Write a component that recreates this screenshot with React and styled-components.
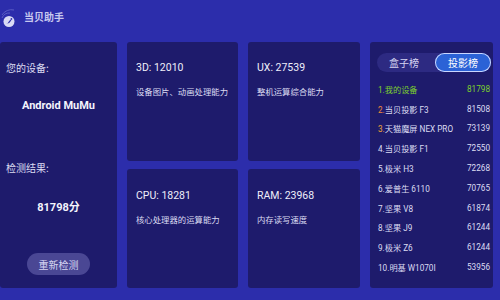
import React from "react";
import styled, { createGlobalStyle } from "styled-components";

const Global = createGlobalStyle`
  html, body { margin: 0; padding: 0; }
  body {
    width: 500px; height: 300px; overflow: hidden;
    background: #2c2dab;
    font-family: Roboto, "Noto Sans CJK SC", sans-serif;
    color: #e4e4f6;
  }
`;

const Page = styled.div`
  width: 500px; height: 300px;
  display: flex; flex-direction: column;
  background: #2c2dab;
`;

const Header = styled.header`
  height: 42px;
  display: flex; align-items: flex-start;
  padding: 9px 0 0 1px;
  box-sizing: border-box;
  gap: 7px;
`;

const Title = styled.span`
  font-size: 10px; font-weight: 700; color: #c7c8ef;
  line-height: 16px;
  font-family: "Noto Sans CJK SC", sans-serif;
`;

const Body = styled.main`
  display: grid;
  grid-template-columns: 117px 111px 112px 123px;
  grid-template-rows: 119px 119px;
  column-gap: 10px; row-gap: 8px;
`;

const Panel = styled.section`
  background: #1e1b6c;
  border-radius: 3px;
`;

const DevicePanel = styled(Panel)`
  grid-row: 1 / span 2;
  display: flex; flex-direction: column;
  padding: 19px 0 0 6px;
  box-sizing: border-box;
`;

const Label = styled.div`
  font-size: 10px; line-height: 14px; color: #dcdcf2;
  font-family: "Noto Sans CJK SC", sans-serif;
  margin-bottom: ${p => p.$mb}px;
`;

const Value = styled.div`
  font-size: 11px; font-weight: 700; line-height: 14px; color: #f4f4fc;
  text-align: center; margin-right: 6px;
  margin-bottom: ${p => p.$mb}px;
`;

const Retest = styled.button`
  align-self: center; margin-right: 6px;
  width: 63px; height: 22px; border: none; border-radius: 11px;
  background: #4a4794; color: #d6d5f2;
  font-family: "Noto Sans CJK SC", sans-serif; font-size: 10px;
  padding: 0; cursor: pointer;
`;

const Card = styled(Panel)`
  padding: ${p => p.$top}px 6px 0 9px;
  box-sizing: border-box;
`;

const CardTitle = styled.div`
  font-size: 10.5px; line-height: 14px; color: #eeeefa;
  margin-bottom: 9px;
`;

const CardDesc = styled.div`
  font-size: 8.4px; line-height: 14px; color: #dcdcf2;
  font-family: "Noto Sans CJK SC", sans-serif;
  white-space: nowrap;
`;

const RankPanel = styled(Panel)`
  grid-row: 1 / span 2; grid-column: 4;
  padding: 11px 2px 0 7px;
  box-sizing: border-box;
  display: flex; flex-direction: column;
`;

const Toggle = styled.div`
  height: 19px; border-radius: 10px;
  background: #2d2a82;
  display: grid; grid-template-columns: 1fr 56px;
  margin-bottom: 7px;
`;

const Tab = styled.div`
  display: flex; align-items: center; justify-content: center;
  font-family: "Noto Sans CJK SC", sans-serif;
  font-size: 10px; border-radius: 10px;
  color: ${p => (p.$active ? "#ffffff" : "#d6d5f2")};
  background: ${p => (p.$active ? "#2b62d6" : "transparent")};
  box-shadow: ${p => (p.$active ? "inset 0 0 0 1px #c9d6ff" : "none")};
  padding-right: ${p => (p.$active ? 0 : 4)}px;
`;

const List = styled.ol`
  list-style: none; margin: 0; padding: 0 1px 0 1px;
`;

const Row = styled.li`
  height: 19.8px;
  display: flex; align-items: center; justify-content: space-between;
  font-size: 8.2px; color: ${p => p.$color || "#dcdcf2"};
  font-family: Roboto, "Noto Sans CJK SC", sans-serif;
  white-space: nowrap;
`;

const Num = styled.span`
  color: ${p => p.$color || "inherit"};
`;

function Logo() {
  return (
    <svg width="16" height="26" viewBox="0 0 16 26">
      <path d="M1 6 A 11 11 0 0 1 13 1" stroke="#5a5cc4" strokeWidth="1" fill="none" />
      <path d="M1 9 A 8 8 0 0 1 9 4" stroke="#5a5cc4" strokeWidth="1" fill="none" />
      <circle cx="8" cy="12.5" r="5.5" fill="#d9daf4" />
      <path d="M5.2 15 C6.6 15.2 7 13.4 8 12.2 C8.8 11.2 9.8 10.4 10.8 10.2 C10 11.4 9.4 13.2 8 14 C7.2 14.5 6.2 14.8 5.2 15 Z" fill="#2c2dab" />
      <circle cx="10.4" cy="9.9" r="0.9" fill="#2c2dab" />
    </svg>
  );
}

const ranks = [
  ["1.我的设备", "81798", "#7dd02c", "#7dd02c"],
  ["2.当贝投影 F3", "81508", "#ef8a3a"],
  ["3.天猫魔屏 NEX PRO", "73139", "#f3a833"],
  ["4.当贝投影 F1", "72550"],
  ["5.极米 H3", "72268"],
  ["6.爱普生 6110", "70765"],
  ["7.坚果 V8", "61874"],
  ["8.坚果 J9", "61244"],
  ["9.极米 Z6", "61244"],
  ["10.明基 W1070I", "53956"],
];

const cards = [
  ["3D: 12010", "设备图片、动画处理能力", 19],
  ["UX: 27539", "整机运算综合能力", 19],
  ["CPU: 18281", "核心处理器的运算能力", 20],
  ["RAM: 23968", "内存读写速度", 20],
];

export default function App() {
  return (
    <Page>
      <Global />
      <Header>
        <Logo />
        <Title>当贝助手</Title>
      </Header>
      <Body>
        <DevicePanel>
          <Label $mb={24}>您的设备:</Label>
          <Value $mb={48}>Android MuMu</Value>
          <Label $mb={26}>检测结果:</Label>
          <Value $mb={38}>81798分</Value>
          <Retest>重新检测</Retest>
        </DevicePanel>
        {cards.map(([t, d, top]) => (
          <Card key={t} $top={top}>
            <CardTitle>{t}</CardTitle>
            <CardDesc>{d}</CardDesc>
          </Card>
        ))}
        <RankPanel>
          <Toggle>
            <Tab>盒子榜</Tab>
            <Tab $active>投影榜</Tab>
          </Toggle>
          <List>
            {ranks.map(([name, score, prefixColor, allColor]) => {
              const dot = name.indexOf(".");
              return (
                <Row key={name} $color={allColor}>
                  <span>
                    <Num $color={prefixColor}>{name.slice(0, dot + 1)}</Num>
                    {name.slice(dot + 1)}
                  </span>
                  <span>{score}</span>
                </Row>
              );
            })}
          </List>
        </RankPanel>
      </Body>
    </Page>
  );
}
